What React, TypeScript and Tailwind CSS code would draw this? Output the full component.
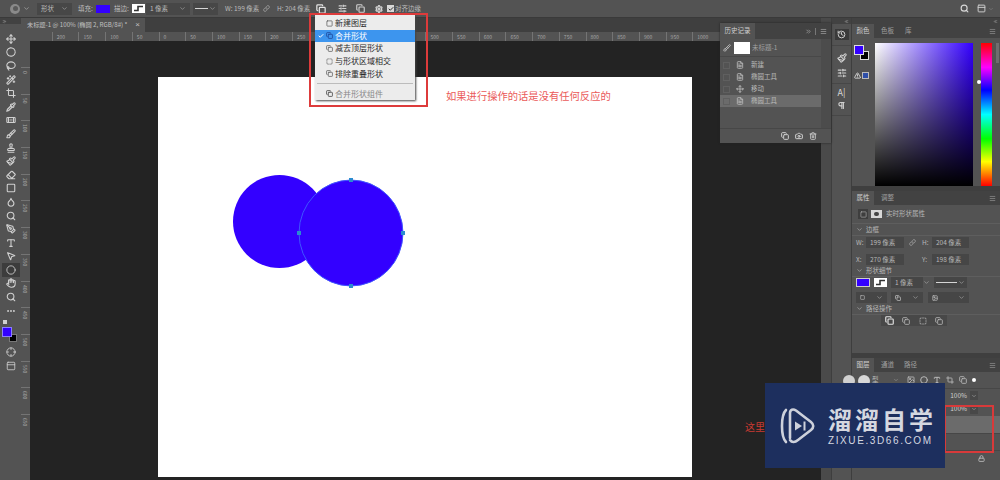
import {
  Bandage, Brush, Camera, Check, ChevronDown, ChevronsLeft, ChevronsRight, Circle, Crop, Droplet, Ellipsis, Eraser,
  Hand, History, Image, Lasso, Link, Lock, Menu, MousePointer2, Move, Paintbrush, PanelTop, PenTool, Pilcrow, Pipette,
  Search, Settings, SlidersHorizontal, Square, Stamp, Trash2, TriangleAlert, Type, Wand2, Copy, FileText,
  SquareDashed, Crosshair,
} from "lucide-react";
import type { ReactNode } from "react";

const CJK = "font-['Noto_Sans_CJK_SC','Liberation_Sans',sans-serif]";

// labels that sit under the open menu or the history panel are left out
const rulerLabels = ["200", "150", "100", "50", "0", "50", "100", "150", "200", "250", "", "", "", "", "500", "550", "600", "650", "700", "750", "800", "850", "900", "950", "1000"];
const sideLabels = [0, 50, 100, 150, 200, 250, 300, 350, 400, 450, 500, 550, 600, 650];

const tools = [
  { icon: Move },
  { icon: Circle, dashed: true },
  { icon: Lasso },
  { icon: Wand2 },
  { icon: Crop },
  { icon: Pipette },
  { icon: Bandage },
  { icon: Brush },
  { icon: Stamp },
  { icon: Paintbrush },
  { icon: Eraser },
  { icon: Square },
  { icon: Droplet },
  { icon: Search },
  { icon: PenTool },
  { icon: Type },
  { icon: MousePointer2 },
  { icon: Circle, active: true },
  { icon: Hand },
  { icon: Search },
  { icon: Ellipsis },
];

const historyRows = [
  { label: "新建", icon: FileText },
  { label: "椭圆工具", icon: FileText },
  { label: "移动", icon: Move },
  { label: "椭圆工具", icon: FileText, active: true },
];

const menuItems = [
  { label: "新建图层", icon: Square },
  { label: "合并形状", icon: Copy, active: true },
  { label: "减去顶层形状", icon: Copy },
  { label: "与形状区域相交", icon: SquareDashed },
  { label: "排除重叠形状", icon: Copy },
];

function Caret() {
  return <ChevronDown size={7} className="text-[#b0b0b0]" strokeWidth={2} />;
}

function Field({ children, className }: { children: ReactNode; className: string }) {
  return <div className={`flex h-[11px] items-center bg-[#464646] px-1 text-[6.5px] text-[#b8b8b8] ${className}`}>{children}</div>;
}

function StrokeSwatch({ className }: { className: string }) {
  return (
    <div className={`flex items-center justify-center bg-white ${className}`}>
      <svg width="9" height="7" viewBox="0 0 9 7">
        <path d="M0 5.5h4V1.5h5" fill="none" stroke="#333" strokeWidth="1.6" />
      </svg>
    </div>
  );
}

function SectionTitle({ title }: { title: string }) {
  return (
    <div className="flex h-[12px] items-center gap-[3px] border-b border-[#5e5e5e] pl-[4px] text-[6.5px] text-[#b8b8b8]">
      <ChevronDown size={7} />
      {title}
    </div>
  );
}

function PanelTabs({ tabs, gapClass }: { tabs: string[]; gapClass: string }) {
  return (
    <div className="flex h-[14px] shrink-0 items-center bg-[#424242] pr-[4px] text-[6.5px] text-[#a0a0a0]">
      <div className="flex h-full w-[22px] items-center justify-center bg-[#535353] text-[#d0d0d0]">{tabs[0]}</div>
      <div className={`flex flex-1 pl-[7px] ${gapClass}`}>
        {tabs.slice(1).map((t) => (
          <span key={t}>{t}</span>
        ))}
      </div>
      <Menu size={7} />
    </div>
  );
}

export default function App() {
  return (
    <div className={`relative flex h-[480px] w-[1000px] flex-col overflow-hidden bg-[#3f3f3f] ${CJK}`}>
      {/* options bar */}
      <div className="flex h-[17px] shrink-0 items-center bg-[#535353] text-[6.5px] text-[#bcbcbc]">
        <div className="ml-[10px] flex h-[10px] w-[10px] items-center justify-center rounded-full bg-[#8a8a8a]">
          <div className="h-[5px] w-[5px] rounded-full bg-[#5a5a5a]" />
        </div>
        <ChevronDown size={7} className="ml-[3px]" />
        <div className="ml-[7px] flex h-[12px] w-[35px] items-center justify-between bg-[#474747] px-[4px]">
          形状
          <Caret />
        </div>
        <span className="ml-[6px] w-[18px]">填充:</span>
        <div className="h-[8px] w-[14px] bg-[#3300ff]" />
        <span className="ml-[4px] w-[18px]">描边:</span>
        <StrokeSwatch className="h-[9px] w-[13px]" />
        <div className="ml-[1px] flex h-[12px] w-[44px] items-center justify-between bg-[#474747] px-[4px]">
          1 像素
          <Caret />
        </div>
        <div className="ml-[3px] flex h-[12px] w-[25px] items-center gap-[1px] bg-[#474747] px-[2px]">
          <div className="h-px flex-1 bg-[#d5d5d5]" />
          <Caret />
        </div>
        <span className="ml-[7px] w-[37px] whitespace-nowrap">W: 199 像素</span>
        <Link size={7} className="ml-[1px]" />
        <span className="ml-[7px] w-[34px] whitespace-nowrap">H: 204 像素</span>
        <Copy size={10} className="ml-[5px] text-[#e4e4e4]" strokeWidth={3} />
        <SlidersHorizontal size={9} className="ml-[12px] text-[#d0d0d0]" strokeWidth={3} />
        <Copy size={9} className="ml-[9px] text-[#d0d0d0]" strokeWidth={3} />
        <Settings size={8} className="ml-[10px] text-[#dcdcdc]" strokeWidth={3.5} />
        <div className="ml-[4px] flex h-[7px] w-[7px] items-center justify-center bg-[#d8d8d8]">
          <Check size={6} className="text-[#333]" strokeWidth={4} />
        </div>
        <span className="ml-[1px] whitespace-nowrap">对齐边缘</span>
        <div className="flex-1" />
        <Search size={9} className="text-[#d8d8d8]" strokeWidth={3} />
        <PanelTop size={9} className="ml-[8px] text-[#d0d0d0]" strokeWidth={2.5} />
        <ChevronDown size={6} className="ml-[2px] mr-[6px] text-[#8a8a8a]" />
      </div>

      <div className="flex min-h-0 flex-1 border-t border-[#3a3a3a]">
        {/* tools */}
        <div className="flex w-[21px] shrink-0 flex-col items-center bg-[#535353] text-[#d0d0d0]">
          <div className="flex h-[6px] w-full items-center bg-[#424242] pl-[2px]">
            <ChevronsRight size={5} />
          </div>
          <div className="mt-[8px] flex flex-col items-center">
            {tools.map((t, i) => {
              const Icon = t.icon;
              return (
                <div key={i} className={`flex h-[13.6px] w-[18px] items-center justify-center ${t.active ? "bg-[#3c3c3c]" : ""}`}>
                  <Icon size={10} strokeWidth={t.active ? 2 : 2.6} strokeDasharray={t.dashed ? "2 2" : undefined} />
                </div>
              );
            })}
          </div>
          <div className="relative mt-[3px] h-[26px] w-[18px]">
            <div className="absolute left-[1px] top-0 h-[4px] w-[4px] bg-[#d0d0d0]" />
            <div className="absolute left-[7px] top-[14px] h-[8px] w-[8px] border border-[#777] bg-black" />
            <div className="absolute left-[0px] top-[7px] h-[10px] w-[10px] border border-[#8a7dff] bg-[#3300ff]" />
          </div>
          <Crosshair size={10} className="mt-[1px]" />
          <PanelTop size={10} className="mt-[4px]" />
        </div>

        {/* document area */}
        <div className="flex w-[800px] shrink-0 flex-col bg-[#3f3f3f]">
          <div className="flex h-[14px] shrink-0">
            <div className="flex w-[124px] items-center justify-between bg-[#535353] pl-[6px] pr-[5px] text-[6.2px] text-[#c0c0c0]">
              <span className="whitespace-nowrap">未标题-1 @ 100% (椭圆 2, RGB/8#) *</span>
              <span className="font-['Liberation_Sans',sans-serif] text-[8px]">×</span>
            </div>
          </div>
          <div className="flex h-[9px] shrink-0 overflow-hidden bg-[#535353] pl-[30.8px] text-[5px] leading-[9px] text-[#a8a8a8]">
            {rulerLabels.map((n, i) => (
              <div key={i} className="h-full w-[26.7px] shrink-0 border-l border-[#747474] pl-[4px]">
                {n}
              </div>
            ))}
          </div>
          <div className="flex min-h-0 flex-1">
            <div className="flex w-[9px] shrink-0 flex-col overflow-hidden bg-[#535353] pt-[26px] text-[5px] leading-[9px] text-[#a8a8a8]">
              {sideLabels.map((n, i) => (
                <div key={i} className="h-[26.7px] w-full shrink-0 border-t border-[#747474] pt-[3px] [writing-mode:vertical-rl]">
                  {n}
                </div>
              ))}
            </div>
            <div className="min-w-0 flex-1 overflow-hidden bg-[#232323] pl-[128px] pt-[36px]">
              <div className="h-[400px] w-[534px] bg-white">
                <svg width="534" height="400" viewBox="0 0 534 400">
                  <ellipse cx="121.5" cy="144.5" rx="46.5" ry="46.5" fill="#3300ff" />
                  <ellipse cx="193" cy="156" rx="52" ry="53" fill="#3300ff" stroke="#3f55ff" strokeWidth="1" />
                  <rect x="191" y="101" width="4" height="4" fill="#2a8ccf" />
                  <rect x="191" y="207" width="4" height="4" fill="#2a8ccf" />
                  <rect x="139" y="154" width="4" height="4" fill="#2a8ccf" />
                  <rect x="243" y="154" width="4" height="4" fill="#2a8ccf" />
                </svg>
              </div>
            </div>
          </div>
        </div>

        {/* strip next to the dock */}
        <div className="w-[10px] shrink-0 bg-[#4a4a4a]" />

        {/* collapsed dock */}
        <div className="flex w-[21px] shrink-0 flex-col items-center border-x border-[#3e3e3e] bg-[#535353] text-[#d0d0d0]">
          <div className="flex h-[6px] w-full items-center justify-end bg-[#424242] pr-[2px]">
            <ChevronsLeft size={5} />
          </div>
          <div className="mt-[5px] flex h-[11px] w-[14px] items-center justify-center bg-[#3a3a3a]">
            <History size={9} strokeWidth={2.6} />
          </div>
          <div className="mt-[5px] h-px w-full bg-[#474747]" />
          <Paintbrush size={10} className="mt-[7px]" strokeWidth={2.6} />
          <SlidersHorizontal size={10} className="mt-[5px]" strokeWidth={2.6} />
          <div className="mt-[5px] h-px w-full bg-[#474747]" />
          <span className="mt-[3px] text-[9px] leading-[12px] text-[#d8d8d8]">A|</span>
          <Pilcrow size={9} className="mt-[2px]" strokeWidth={3} />
          <div className="mt-[5px] h-px w-full bg-[#474747]" />
        </div>

        {/* right panels */}
        <div className="flex min-w-0 flex-1 flex-col gap-[3px]">
          <div className="flex h-[6px] shrink-0 items-center justify-end bg-[#424242] pr-[2px] text-[#d0d0d0]">
            <ChevronsLeft size={5} />
          </div>

          {/* colour */}
          <div className="-mt-[3px] flex h-[162px] shrink-0 flex-col bg-[#535353]">
            <PanelTabs tabs={["颜色", "色板", "库"]} gapClass="gap-[11px]" />
            <div className="flex flex-1">
              <div className="relative h-full w-[23px] shrink-0">
                <div className="absolute left-[8px] top-[13px] h-[9px] w-[9px] border border-[#ddd] bg-black" />
                <div className="absolute left-[2px] top-[7px] h-[10px] w-[10px] border border-[#ddd] bg-[#3300ff]" />
                <TriangleAlert size={7} className="absolute left-[2px] top-[34px] text-[#ddd]" strokeWidth={3} />
                <div className="absolute left-[10px] top-[34px] h-[7px] w-[7px] border border-[#bbb] bg-[#2f4fa8]" />
              </div>
              <div className="mt-[5px] h-[143px] w-[98px] shrink-0 bg-[linear-gradient(to_bottom,transparent,#000),linear-gradient(to_right,#fff,#3300ff)]" />
              <div className="relative ml-[8px] mt-[5px] h-[143px] w-[11px] shrink-0 bg-[linear-gradient(to_bottom,#ff0000,#ff00ff_17%,#0000ff_33%,#00ffff_50%,#00ff00_67%,#ffff00_83%,#ff0000)]">
                <div className="absolute -left-[4px] top-[37px] h-[4px] w-[4px] rounded-full bg-white" />
              </div>
              <div className="ml-[4px] mt-[5px] h-[20px] w-[3px] bg-[#6e6e6e]" />
            </div>
          </div>

          {/* properties */}
          <div className="mt-[2px] flex h-[162px] shrink-0 flex-col bg-[#535353] text-[6.5px] text-[#b8b8b8]">
            <PanelTabs tabs={["属性", "调整"]} gapClass="gap-[11px]" />
            <div className="flex h-[19px] items-center gap-[3px] border-b border-[#5e5e5e] pl-[6px]">
              <div className="flex h-[10px] w-[10px] items-center justify-center bg-[#3e3e3e]">
                <Square size={7} />
              </div>
              <div className="flex h-[8px] w-[11px] items-center justify-center bg-[#d8d8d8]">
                <div className="h-[4px] w-[5px] rounded-full bg-[#444]" />
              </div>
              <span className="ml-[1px]">实时形状属性</span>
            </div>
            <SectionTitle title="边框" />
            <div className="mt-[1px] flex items-center pl-[4px]">
              <span className="w-[10px]">W:</span>
              <Field className="w-[38px]">199 像素</Field>
              <Link size={7} className="ml-[5px]" />
              <span className="ml-[6px] w-[10px]">H:</span>
              <Field className="w-[37px]">204 像素</Field>
            </div>
            <div className="mt-[6px] flex items-center pl-[4px]">
              <span className="w-[10px]">X:</span>
              <Field className="w-[38px]">270 像素</Field>
              <span className="ml-[18px] w-[10px]">Y:</span>
              <Field className="w-[37px]">198 像素</Field>
            </div>
            <SectionTitle title="形状细节" />
            <div className="flex items-center pl-[4px]">
              <div className="h-[9px] w-[14px] border border-[#ccc] bg-[#3300ff]" />
              <StrokeSwatch className="ml-[4px] h-[9px] w-[13px]" />
              <Field className="ml-[4px] w-[32px]">1 像素</Field>
              <Caret />
              <div className="ml-[4px] flex h-[11px] w-[33px] items-center gap-[1px] bg-[#464646] px-[2px]">
                <div className="h-px flex-1 bg-[#d5d5d5]" />
                <Caret />
              </div>
            </div>
            <div className="mt-[4px] flex items-center gap-[4px] pl-[4px]">
              <Field className="w-[31px] justify-between">
                <Square size={5} strokeWidth={3} />
                <Caret />
              </Field>
              <Field className="w-[32px] justify-between">
                <Copy size={6} strokeWidth={3} />
                <Caret />
              </Field>
              <Field className="ml-[1px] w-[41px] justify-between">
                <Image size={6} strokeWidth={3} />
                <Caret />
              </Field>
            </div>
            <SectionTitle title="路径操作" />
            <div className="ml-[29px] flex w-[66px] items-center justify-around bg-[#484848] py-[1px]">
              <Copy size={9} strokeWidth={3} className="text-[#e4e4e4]" />
              <Copy size={8} strokeWidth={2.5} />
              <SquareDashed size={8} strokeWidth={2.5} />
              <Copy size={8} strokeWidth={2.5} />
            </div>
          </div>

          {/* layers */}
          <div className="mt-[2px] flex min-h-0 flex-1 flex-col bg-[#535353] text-[6.5px] text-[#b8b8b8]">
            <PanelTabs tabs={["图层", "通道", "路径"]} gapClass="gap-[10px]" />
            <div className="flex h-[16px] items-center justify-end gap-[5px] pr-[24px]">
              <Image size={8} strokeWidth={2.6} />
              <Circle size={8} strokeWidth={3} />
              <Type size={8} strokeWidth={3} />
              <Crop size={8} strokeWidth={2.6} />
              <Copy size={8} strokeWidth={2.6} />
              <div className="h-[4px] w-[4px] rounded-full bg-white" />
            </div>
            <div className="flex h-[14px] items-center justify-end border-t border-[#474747] pr-[22px]">
              <span className="text-[#cfcfcf]">100%</span>
              <span className="ml-[3px] flex h-[9px] w-[8px] items-center justify-center bg-[#484848]">
                <ChevronDown size={6} />
              </span>
            </div>
            <div className="flex h-[14px] items-center justify-end pr-[22px]">
              <span className="text-[#cfcfcf]">100%</span>
              <span className="ml-[3px] flex h-[9px] w-[8px] items-center justify-center bg-[#484848]">
                <ChevronDown size={6} />
              </span>
            </div>
            <div className="h-[17px] bg-[#6b6b6b]" />
            <div className="h-[17px] border-t border-[#474747]" />
            <div className="flex flex-1 items-start justify-end border-t border-[#474747] pr-[15px] pt-[4px]">
              <Lock size={7} strokeWidth={3} />
            </div>
          </div>
        </div>
      </div>

      {/* floating history panel */}
      <div className="absolute left-[720px] top-[23px] flex h-[120px] w-[111px] flex-col bg-[#535353] text-[6.5px] text-[#b8b8b8] shadow-[0_0_2px_#222]">
        <div className="flex h-[16px] shrink-0 items-center bg-[#424242]">
          <div className="flex h-full w-[35px] items-center justify-center bg-[#535353] text-[#d0d0d0]">历史记录</div>
          <div className="flex-1" />
          <ChevronsRight size={7} />
          <span className="ml-[3px] h-[7px] w-px bg-[#777]" />
          <Menu size={7} className="ml-[4px] mr-[4px]" />
        </div>
        <div className="flex min-h-0 flex-1">
          <div className="flex w-[101px] flex-col">
            <div className="flex h-[18px] items-center border-b border-[#484848] pl-[3px]">
              <Brush size={8} strokeWidth={2.8} />
              <div className="ml-[3px] h-[12px] w-[16px] bg-white" />
              <span className="ml-[2px] text-[#a0a0a0]">未标题-1</span>
            </div>
            <div className="h-[2px]" />
            {historyRows.map((row, i) => {
              const Icon = row.icon;
              return (
                <div key={i} className={`flex h-[12px] items-center pl-[3px] ${row.active ? "bg-[#6b6b6b]" : ""}`}>
                  <div className="h-[7px] w-[7px] border border-[#5f5f5f]" />
                  <Icon size={8} className="ml-[6px]" strokeWidth={2.6} />
                  <span className="ml-[7px] whitespace-nowrap">{row.label}</span>
                </div>
              );
            })}
          </div>
          <div className="flex-1 bg-[#4c4c4c]" />
        </div>
        <div className="flex h-[15px] shrink-0 items-center justify-end gap-[6px] border-t border-[#474747] pr-[14px] text-[#d0d0d0]">
          <Copy size={8} strokeWidth={3} />
          <Camera size={8} strokeWidth={3} />
          <Trash2 size={8} strokeWidth={2.6} />
        </div>
      </div>

      {/* merge shapes menu */}
      <div className="absolute left-[315px] top-[15px] flex h-[85px] w-[100px] flex-col bg-[#ececec] pt-[2px] text-[8px] text-[#2b2b2b] shadow-[1px_1px_2px_#444]">
        {menuItems.map((item) => {
          const Icon = item.icon;
          return (
            <div key={item.label} className={`flex h-[12.6px] items-center ${item.active ? "bg-[#3d95ee] text-white" : ""}`}>
              <span className="flex w-[11px] justify-center">{item.active && <Check size={6} strokeWidth={4} />}</span>
              <Icon size={7} className={item.active ? "text-[#1c3f8f]" : "text-[#555]"} strokeWidth={2.4} />
              <span className="ml-[2px] whitespace-nowrap">{item.label}</span>
            </div>
          );
        })}
        <div className="mx-[2px] mb-[4px] mt-[3px] h-px bg-[#bcbcbc]" />
        <div className="flex h-[12px] items-center pl-[11px] text-[#888]">
          <Copy size={7} className="text-[#555]" strokeWidth={3} />
          <span className="ml-[2px] whitespace-nowrap">合并形状组件</span>
        </div>
      </div>

      {/* annotations */}
      <div className="absolute left-[309px] top-[13px] h-[94px] w-[119px] border-2 border-[#dd3b3b]" />
      <div className="absolute left-[446px] top-[89px] whitespace-nowrap text-[10.3px] leading-[14px] text-[#ea5a5a]">如果进行操作的话是没有任何反应的</div>
      <div className="absolute left-[944px] top-[405px] h-[48px] w-[50px] border-2 border-[#d83a3a]" />
      <div className="absolute left-[745px] top-[420px] text-[10px] leading-[14px] text-[#c93a32]">这里</div>

      {/* brush blobs of the layer panel's filter row */}
      <div className="absolute left-[843px] top-[375px] h-[12px] w-[12px] rounded-full bg-[#d0d0d0]" />
      <div className="absolute left-[858px] top-[375px] h-[12px] w-[12px] rounded-full bg-[#d8d8d8]" />
      <div className="absolute left-[872px] top-[375px] text-[6.5px] leading-[9px] text-[#b8b8b8]">型</div>
      <ChevronDown size={6} className="absolute left-[893px] top-[377px] text-[#a0a0a0]" />

      {/* watermark */}
      <div className="absolute left-[765px] top-[383px] flex h-[85px] w-[180px] items-center bg-[#1d2f5e] pl-[15px] text-[#d5d8e0]">
        <svg width="35" height="38" viewBox="0 0 35 38" fill="none" stroke="#cdd1db" strokeWidth="2.6" strokeLinecap="round" strokeLinejoin="round">
          <path d="M6 3 C3 6 2 10 2 19 C2 28 3 32 6 35" />
          <path d="M10 31 L10 6 C10 2.5 13 1.5 16 3.5 L31 15 C34 17.5 34 20.5 31 23 L18 33 C15 35.5 12 36 10 33" />
          <path d="M15 14.5 L22 19 L15 23.5 Z" fill="#cdd1db" stroke="none" />
          <path d="M24.5 14.5 V23.5" strokeWidth="2" strokeLinecap="butt" />
        </svg>
        <div className="ml-[13px] flex flex-col">
          <span className="text-[24px] font-bold leading-[30px] tracking-[3px] whitespace-nowrap">溜溜自学</span>
          <span className="mt-[1px] font-['Liberation_Sans',sans-serif] text-[10px] leading-[12px] tracking-[1.6px] whitespace-nowrap">ZIXUE.3D66.COM</span>
        </div>
      </div>
    </div>
  );
}
